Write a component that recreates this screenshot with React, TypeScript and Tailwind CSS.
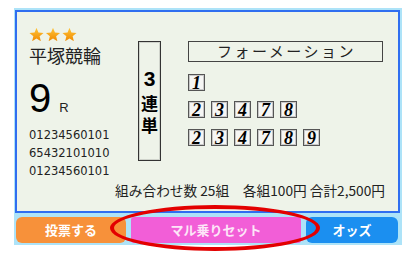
import React from "react";

const JP = { fontFamily: '"Noto Sans CJK JP", "Noto Sans", sans-serif' };

function Stars() {
  const star = (cx: number) => {
    const pts: string[] = [];
    for (let i = 0; i < 10; i++) {
      const r = i % 2 === 0 ? 7.4 : 3.3;
      const a = (Math.PI / 5) * i - Math.PI / 2;
      pts.push(`${cx + r * Math.cos(a)},${7.2 + r * Math.sin(a)}`);
    }
    return pts.join(" ");
  };
  return (
    <svg width="48" height="13" viewBox="0 0 48 13" className="block">
      <defs>
        <linearGradient id="sg" x1="0" y1="0" x2="0" y2="1">
          <stop offset="0" stopColor="#ffc53a" />
          <stop offset="1" stopColor="#f08a00" />
        </linearGradient>
      </defs>
      {[7.5, 24, 40.5].map((c) => (
        <polygon key={c} points={star(c)} fill="url(#sg)" />
      ))}
    </svg>
  );
}

function NumBox({ n }: { n: number }) {
  return (
    <div
      className="w-[17px] h-[17px] border border-[#555] bg-[#f6f6f4] shadow-[inset_0_0_0_1px_#c8c8c8] flex items-center justify-center text-[18px] font-bold italic leading-none text-black"
      style={{ fontFamily: '"Liberation Serif", serif' }}
    >
      {n}
    </div>
  );
}

function Row({ nums }: { nums: number[] }) {
  return (
    <div className="flex gap-[6px]">
      {nums.map((n) => (
        <NumBox key={n} n={n} />
      ))}
    </div>
  );
}

export default function App() {
  return (
    <div className="relative w-[415px] h-[254px] bg-white overflow-hidden">
      <div className="ml-[14px] mt-[8px] w-[388px] bg-[#ade3f8] p-[2px] pl-[1px]">
        <div className="h-[203px] border-2 border-[#2f6ef0] bg-[#eef3e9] pl-[12px] pr-[13px] pt-[16px] flex flex-col text-[#111]">
          <div className="flex items-start">
            <div className="w-[109px] flex flex-col">
              <Stars />
              <div className="mt-[3px] text-[18px] leading-[22px] text-[#222]" style={JP}>
                平塚競輪
              </div>
              <div className="mt-[12px] flex items-baseline" style={{ fontFamily: '"Liberation Sans", sans-serif' }}>
                <span className="text-[40px] leading-[40px] text-black">9</span>
                <span className="ml-[8px] text-[13px] text-[#222]">R</span>
              </div>
              <div
                className="mt-[8px] text-[11.5px] leading-[18px] text-[#222]"
                style={{ fontFamily: '"DejaVu Sans", sans-serif' }}
              >
                <div>01234560101</div>
                <div>65432101010</div>
                <div>01234560101</div>
              </div>
            </div>
            <div className="mt-[13px] w-[23px] h-[120px] border border-[#333] shadow-[inset_0_0_0_1px_#cfd3cb] flex flex-col items-center pt-[26px]">
              <div className="text-[21px] leading-[22px] font-bold text-black" style={{ fontFamily: '"Liberation Sans", sans-serif' }}>
                3
              </div>
              <div
                className="mt-[5px] [writing-mode:vertical-rl] text-[17px] leading-[21px] tracking-[5px] font-bold text-black"
                style={JP}
              >
                連単
              </div>
            </div>
            <div className="ml-[27px] mt-[13px] w-[195px] flex flex-col">
              <div
                className="h-[21px] border border-[#444] flex items-center justify-center text-[15px] tracking-[2.5px] pl-[2px] text-[#222]"
                style={JP}
              >
                フォーメーション
              </div>
              <div className="mt-[12px]">
                <Row nums={[1]} />
              </div>
              <div className="mt-[10px]">
                <Row nums={[2, 3, 4, 7, 8]} />
              </div>
              <div className="mt-[11px]">
                <Row nums={[2, 3, 4, 7, 8, 9]} />
              </div>
            </div>
          </div>
          <div className="mt-[0px] text-right text-[13.7px] leading-[20px] text-[#222]" style={JP}>
            組み合わせ数 25組　各組100円 合計2,500円
          </div>
        </div>
        <div className="mt-[4px] flex gap-[5px] h-[26px] pl-[1px] pr-[2px] text-[13px] text-white" style={JP}>
          <div className="w-[110px] rounded-[6px] bg-[#f7913a] flex items-center justify-center font-bold">投票する</div>
          <div className="w-[170px] rounded-[3px] bg-[#f25ed7] flex items-center justify-center font-bold text-[#fde6f8]">
            マル乗りセット
          </div>
          <div className="flex-1 rounded-[6px] bg-[#1b8ff0] flex items-center justify-center font-bold">オッズ</div>
        </div>
      </div>
      <div className="absolute left-[110px] top-[205px] w-[210px] h-[46px] rounded-[50%] border-[4px] border-[#e30000]" />
    </div>
  );
}
